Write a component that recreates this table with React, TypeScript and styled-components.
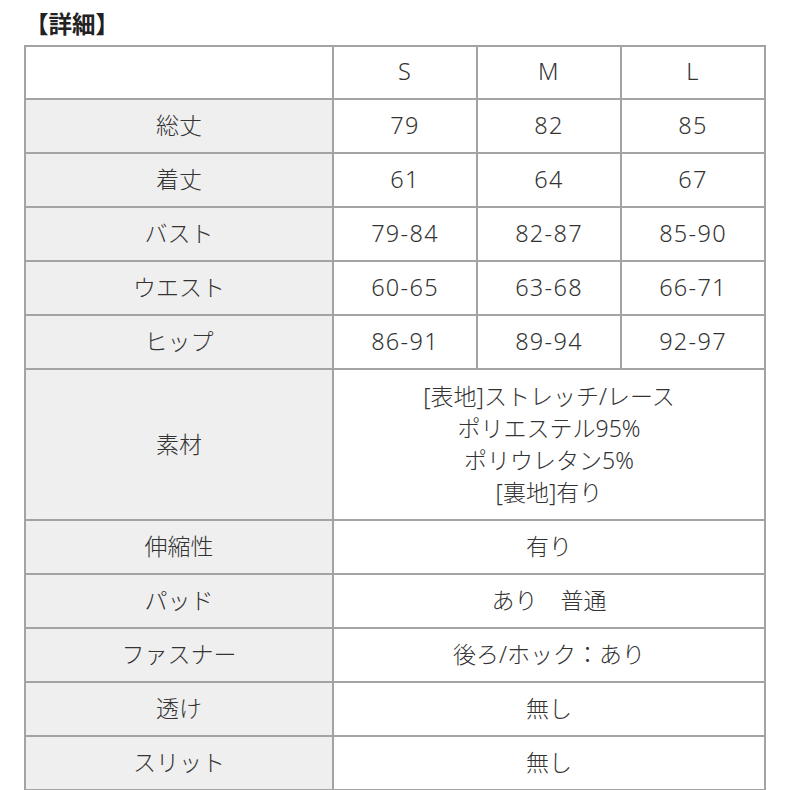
import React from "react";
import styled, { createGlobalStyle } from "styled-components";

const Global = createGlobalStyle`
  html, body { margin: 0; padding: 0; background: #ffffff; }
  body {
    font-family: "Noto Sans", "Noto Sans CJK JP", sans-serif;
    color: #333333;
  }
`;

const Page = styled.div`
  width: 790px;
  height: 790px;
  overflow: hidden;
  padding-left: 24px;
  box-sizing: border-box;
`;

const Title = styled.h2`
  margin: 0;
  height: 45px;
  display: flex;
  align-items: center;
  padding-left: 1px;
  padding-top: 2px;
  font-family: "Noto Sans CJK JP", sans-serif;
  font-weight: 700;
  font-size: 23.5px;
  line-height: 1;
  color: #222222;
  box-sizing: border-box;
`;

const Grid = styled.div`
  display: grid;
  grid-template-columns: 306px repeat(3, 142px);
  gap: 2px;
  padding: 2px;
  width: max-content;
  background: #a3a3a3;
`;

const Cell = styled.div<{ $label?: boolean; $span?: number; $num?: boolean }>`
  display: flex;
  align-items: center;
  justify-content: center;
  text-align: center;
  background: ${(p) => (p.$label ? "#efefef" : "#ffffff")};
  grid-column: ${(p) => (p.$span ? `span ${p.$span}` : "auto")};
  font-size: ${(p) => (p.$num ? "23.5px" : "23px")};
  font-weight: 300;
  letter-spacing: ${(p) => (p.$num ? "1.3px" : "0")};
  line-height: 1;
  color: #333333;
  font-family: "Noto Sans", "Noto Sans CJK JP", sans-serif;
  white-space: nowrap;
  padding-bottom: 1px;
  box-sizing: border-box;
`;

const Lines = styled.div`
  display: flex;
  flex-direction: column;
  line-height: 32px;
  font-size: 23px;
  font-weight: 300;
`;

const sizeRows: [string, string, string, string][] = [
  ["総丈", "79", "82", "85"],
  ["着丈", "61", "64", "67"],
  ["バスト", "79-84", "82-87", "85-90"],
  ["ウエスト", "60-65", "63-68", "66-71"],
  ["ヒップ", "86-91", "89-94", "92-97"],
];

const infoRows: [string, string][] = [
  ["伸縮性", "有り"],
  ["パッド", "あり\u3000普通"],
  ["ファスナー", "後ろ/ホック：あり"],
  ["透け", "無し"],
  ["スリット", "無し"],
];

export default function App() {
  return (
    <Page>
      <Global />
      <Title>【詳細】</Title>
      <Grid style={{ gridTemplateRows: "51px repeat(5, 52px) 149px repeat(5, 52px)" }}>
        <Cell />
        <Cell $num>S</Cell>
        <Cell $num>M</Cell>
        <Cell $num>L</Cell>
        {sizeRows.map((r) => (
          <React.Fragment key={r[0]}>
            <Cell $label>{r[0]}</Cell>
            <Cell $num>{r[1]}</Cell>
            <Cell $num>{r[2]}</Cell>
            <Cell $num>{r[3]}</Cell>
          </React.Fragment>
        ))}
        <Cell $label>素材</Cell>
        <Cell $span={3}>
          <Lines>
            <span>[表地]ストレッチ/レース</span>
            <span>ポリエステル95%</span>
            <span>ポリウレタン5%</span>
            <span>[裏地]有り</span>
          </Lines>
        </Cell>
        {infoRows.map((r) => (
          <React.Fragment key={r[0]}>
            <Cell $label>{r[0]}</Cell>
            <Cell $span={3}>{r[1]}</Cell>
          </React.Fragment>
        ))}
      </Grid>
    </Page>
  );
}
